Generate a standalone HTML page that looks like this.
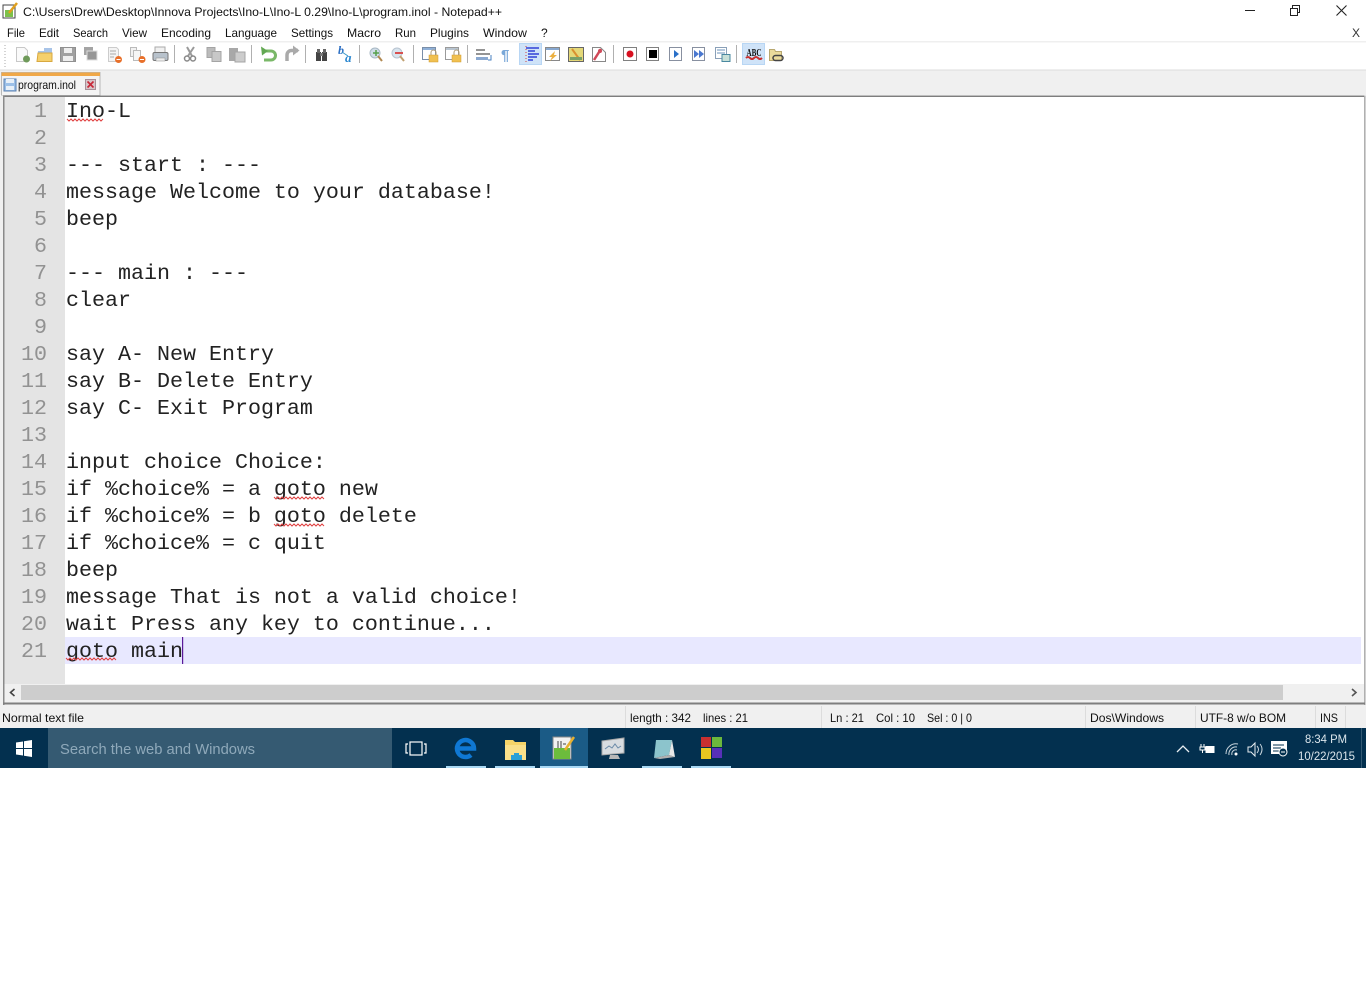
<!DOCTYPE html>
<html><head><meta charset="utf-8"><title>Notepad++</title>
<style>
html,body{margin:0;padding:0;background:#fff;width:1366px;height:986px;overflow:hidden}
svg{position:absolute;left:0;top:0;display:block}
.ui{font-family:"Liberation Sans",sans-serif;font-size:12px;fill:#111}
.c{font-family:"Liberation Mono",monospace;font-size:21.67px;fill:#222;white-space:pre}
.n{font-family:"Liberation Mono",monospace;font-size:21.67px;fill:#929292;text-anchor:end}
.sq{fill:none;stroke:#e04040;stroke-width:1}
</style></head><body>
<svg width="1366" height="986" viewBox="0 0 1366 986" xmlns="http://www.w3.org/2000/svg">
<rect width="1366" height="986" fill="#fff"/>
<!-- title -->
<g>
<rect x="3" y="5" width="12" height="13" fill="#fff" stroke="#444"/><rect x="5" y="10" width="8" height="7" fill="#7cc04a"/><path d="M9 13L17 3" stroke="#e0a020" stroke-width="2.500"/>
</g>
<text class="ui" x="23" y="16" textLength="479" lengthAdjust="spacingAndGlyphs" fill="#222">C:\Users\Drew\Desktop\Innova Projects\Ino-L\Ino-L 0.29\Ino-L\program.inol - Notepad++</text>
<path d="M1245 10.500H1255" stroke="#222" stroke-width="1"/>
<path d="M1290.500 8.500h7v7h-7zM1292.500 8V5.500h7v7H1298" fill="none" stroke="#222"/>
<path d="M1336.500 5.500l10 10M1346.500 5.500l-10 10" stroke="#222" stroke-width="1.100"/>
<!-- menu -->
<g class="ui">
<text x="7" y="37" textLength="18" lengthAdjust="spacingAndGlyphs">File</text>
<text x="39" y="37" textLength="20" lengthAdjust="spacingAndGlyphs">Edit</text>
<text x="73" y="37" textLength="35" lengthAdjust="spacingAndGlyphs">Search</text>
<text x="122" y="37" textLength="25" lengthAdjust="spacingAndGlyphs">View</text>
<text x="161" y="37" textLength="50" lengthAdjust="spacingAndGlyphs">Encoding</text>
<text x="225" y="37" textLength="52" lengthAdjust="spacingAndGlyphs">Language</text>
<text x="291" y="37" textLength="42" lengthAdjust="spacingAndGlyphs">Settings</text>
<text x="347" y="37" textLength="34" lengthAdjust="spacingAndGlyphs">Macro</text>
<text x="395" y="37" textLength="21" lengthAdjust="spacingAndGlyphs">Run</text>
<text x="430" y="37" textLength="39" lengthAdjust="spacingAndGlyphs">Plugins</text>
<text x="483" y="37" textLength="44" lengthAdjust="spacingAndGlyphs">Window</text>
<text x="541" y="37">?</text>
<text x="1352" y="37" fill="#333">X</text>
</g>
<rect y="41" width="1366" height="1.500" fill="#efefef"/>
<!-- toolbar -->
<path d="M5 45v23" stroke="#aaa" stroke-dasharray="1 2"/>
<g>
<path d="M16.500 47.500h8l3 3v11h-11z" fill="#fafafa" stroke="#c8c8c8"/><circle cx="26.500" cy="59" r="3.500" fill="#6f9a5a"/>
<path d="M38 51h6v-3h8v8h-14z" fill="#a8c4e8"/><path d="M38 53h14v8.500h-15z" fill="#f5d06c" stroke="#d8a840"/>
<rect x="60.500" y="47.500" width="15" height="14" fill="#a0a0a0" stroke="#909090"/><rect x="64" y="48" width="8" height="5" fill="#eee"/><rect x="63" y="56" width="10" height="5" fill="#eee"/>
<rect x="84" y="47" width="9" height="8" fill="#a4a4a4"/><rect x="87" y="51" width="10" height="9" fill="#969696" stroke="#ddd"/>
<path d="M108.500 47.500h8l2 2v12h-10z" fill="#f4f4f4" stroke="#ccc"/><path d="M110 51h6M110 54h6M110 57h4" stroke="#aaa"/><circle cx="118.500" cy="59.500" r="3.500" fill="#e8702a"/><path d="M116.500 59.500h4" stroke="#fff"/>
<path d="M130.500 47.500h6v9h-6z" fill="#f2f2f2" stroke="#bbb"/><path d="M133.500 50.500h7v10h-7z" fill="#f6f6f6" stroke="#bbb"/><circle cx="142" cy="59.500" r="3.500" fill="#e8702a"/><path d="M140 59.500h4" stroke="#fff"/>
<rect x="155" y="47" width="10" height="6" fill="#f0f0f0" stroke="#aaa"/><rect x="153" y="52.500" width="15" height="8" rx="1.500" fill="#b8c2cc" stroke="#777"/><rect x="156" y="58" width="9" height="3" fill="#eee" stroke="#888" stroke-width=".5"/>
<rect x="174" y="45" width="1" height="18" fill="#b0b0b0"/>
<path d="M194 47l-6 9M187 47l5 9" stroke="#9a9a9a" stroke-width="2"/><circle cx="187" cy="58.500" r="2.500" fill="none" stroke="#888" stroke-width="1.500"/><circle cx="193" cy="58.500" r="2.500" fill="none" stroke="#888" stroke-width="1.500"/>
<rect x="207" y="47.500" width="8" height="10" fill="#bbb" stroke="#a4a4a4"/><rect x="212" y="51.500" width="9" height="10" fill="#c8c8c8" stroke="#a4a4a4"/>
<rect x="229" y="48" width="9" height="13" fill="#a8a8a8"/><rect x="235" y="52" width="10" height="10" fill="#ccc" stroke="#a4a4a4"/>
<rect x="251" y="45" width="1" height="18" fill="#b0b0b0"/>
<path d="M263 51h8a4.500 4.500 0 0 1 0 9h-7" fill="none" stroke="#7ab868" stroke-width="3"/><path d="M261 46.500l1 9 6-4.500z" fill="#62a852"/>
<path d="M298 50.500h-6a4.500 4.500 0 0 0-5 4.500v6" fill="none" stroke="#aaa" stroke-width="3.500"/><path d="M293 45.500l6.500 5-6.500 5z" fill="#aaa"/>
<rect x="305" y="45" width="1" height="18" fill="#b0b0b0"/>
<rect x="316" y="52" width="5" height="9" fill="#444"/><rect x="322" y="52" width="5" height="9" fill="#444"/><rect x="317" y="49" width="3" height="4" fill="#666"/><rect x="323" y="49" width="3" height="4" fill="#666"/><rect x="320" y="53" width="3" height="3" fill="#777"/>
<text x="338" y="54" font-family="Liberation Serif,serif" font-style="italic" font-weight="bold" font-size="12" fill="#2c6fc4">b</text><text x="345" y="62" font-family="Liberation Serif,serif" font-style="italic" font-weight="bold" font-size="13" fill="#2c88d0">a</text><path d="M342 52l6 4" stroke="#3a98c8"/>
<rect x="359" y="45" width="1" height="18" fill="#b0b0b0"/>
<circle cx="375" cy="53" r="5" fill="#d0dde8" stroke="#a8b8c4"/><path d="M373 53h6M376 50v6" stroke="#56a04a" stroke-width="1.500"/><path d="M378 56l4 5" stroke="#b08850" stroke-width="2"/>
<circle cx="397" cy="53" r="5" fill="#d8e4ee" stroke="#b8c4d0"/><path d="M395 53h8" stroke="#d85050" stroke-width="2"/><path d="M400 56l4 5" stroke="#c0a070" stroke-width="2"/>
<rect x="413" y="45" width="1" height="18" fill="#b0b0b0"/>
<rect x="422.500" y="47.500" width="13" height="12" fill="#fff" stroke="#7a8ea8"/><rect x="423" y="48" width="12" height="2" fill="#8fb0d8"/><rect x="429" y="55" width="9" height="7" fill="#f0c050" stroke="#d09a30" stroke-width=".5"/><path d="M431 55v-2.500a2.500 2.500 0 0 1 5 0V55" fill="none" stroke="#b09a70"/>
<rect x="445.500" y="47.500" width="13" height="12" fill="#fff" stroke="#9a9a9a"/><rect x="446" y="48" width="12" height="2" fill="#b8c4d0"/><rect x="452" y="55" width="9" height="7" fill="#f0c050" stroke="#d09a30" stroke-width=".5"/><path d="M454 55v-2.500a2.500 2.500 0 0 1 5 0V55" fill="none" stroke="#b09a70"/>
<rect x="467" y="45" width="1" height="18" fill="#b0b0b0"/>
<path d="M476 50h9M476 54h14" stroke="#555" stroke-width="1.200"/><path d="M476 58.500h12" stroke="#8aa8d0" stroke-width="3"/><path d="M491 55v5h-3" fill="none" stroke="#4a80c0"/>
<text x="501" y="60" font-family="Liberation Sans,sans-serif" font-weight="bold" font-size="15" fill="#7aa8d8">¶</text>
<rect x="519.500" y="43.500" width="22" height="21" fill="#cfe3f8" stroke="#b8d6f4"/>
<path d="M526 48h13M528 51h7M528 54h11M528 57h9M528 60h5" stroke="#1020d0" stroke-width="1.300"/><path d="M526 46v18" stroke="#d04040" stroke-dasharray="1 2"/>
<rect x="545.500" y="47.500" width="14" height="13" fill="#fff" stroke="#888"/><rect x="546" y="48" width="13" height="2" fill="#88a8d0"/><path d="M555 51l-6 6h3l-2 4 7-6h-3z" fill="#ecb040"/>
<rect x="568.500" y="47.500" width="15" height="14" fill="#e4d878" stroke="#666"/><path d="M572 49l8 11" stroke="#d89030" stroke-width="2"/><rect x="570" y="57" width="12" height="3" fill="#78a068"/>
<path d="M592.500 47.500h8l5 5v9h-13z" fill="#fff" stroke="#888"/><path d="M594 60l7-11" stroke="#d04858" stroke-width="2.500"/><circle cx="600" cy="51" r="2" fill="#d04858"/>
<rect x="613" y="45" width="1" height="18" fill="#b0b0b0"/>
<rect x="623.500" y="47.500" width="13" height="13" fill="#fff" stroke="#808080"/><circle cx="630" cy="54" r="3.500" fill="#d81020"/>
<rect x="646.500" y="47.500" width="12" height="13" fill="#fff" stroke="#808080"/><rect x="649" y="50" width="8" height="8" fill="#000"/>
<rect x="669.500" y="47.500" width="12" height="13" fill="#fff" stroke="#8890a0"/><path d="M674 50l5 4-5 4z" fill="#2a70c8"/>
<rect x="692.500" y="47.500" width="12" height="13" fill="#fff" stroke="#8890a0"/><path d="M694 50l5 4-5 4zM699 50l5 4-5 4z" fill="#4a78d0"/>
<rect x="715.500" y="47.500" width="11" height="11" fill="#fff" stroke="#8aa0b8"/><path d="M717 50h8M717 53h8" stroke="#6a90b8"/><rect x="722" y="54.500" width="8" height="7" fill="#c8e0d8" stroke="#4a88a0"/>
<rect x="736" y="45" width="1" height="18" fill="#b0b0b0"/>
<rect x="742.500" y="43.500" width="22" height="21" fill="#cfe3f8" stroke="#b8d6f4"/>
<text x="746.500" y="56" font-family="Liberation Serif,serif" font-weight="bold" font-size="10" fill="#111" textLength="15" lengthAdjust="spacingAndGlyphs">ABC</text><path d="M746 58q2-2 4 0t4 0t4 0t4 0" fill="none" stroke="#c83030" stroke-width="2"/>
<path d="M769.500 49.500h5l1 2h6v9h-12z" fill="#eadb9c" stroke="#b8a870"/><rect x="773" y="55.500" width="10" height="5" rx="2.500" fill="none" stroke="#444" stroke-width="1.500"/>
</g>
<rect y="70" width="1366" height="25" fill="#f0f0f0"/>
<rect y="69.500" width="1366" height="1" fill="#dcdcdc"/>
<rect x="1.500" y="72.500" width="98.500" height="23" fill="#f4f4f4" stroke="#b8b8b8"/>
<rect x="1.500" y="72.500" width="98.500" height="3.500" fill="#f0a848"/>
<rect x="4" y="79" width="12" height="12" fill="#9cc0e8" stroke="#5a80b0"/><rect x="6" y="79" width="8" height="4" fill="#e8f0f8"/><rect x="6" y="86" width="8" height="4" fill="#e8f0f8"/>
<text class="ui" x="18" y="89" textLength="58" lengthAdjust="spacingAndGlyphs">program.inol</text>
<rect x="85.500" y="79.500" width="10" height="10" fill="#d8c4c8" stroke="#a89098"/><path d="M87.500 81.500l6 6M93.500 81.500l-6 6" stroke="#c82838" stroke-width="1.600"/>
<!-- editor -->
<rect x="0" y="95.500" width="1366" height="610" fill="#f0f0f0"/>
<rect x="3" y="95.500" width="1362" height="2" fill="#7e7e7e"/>
<rect x="3" y="95.500" width="1.500" height="610" fill="#8a8a8a"/>
<rect x="1364" y="95.500" width="1.500" height="610" fill="#b0b0b0"/>
<rect x="4.500" y="97" width="1359.500" height="587" fill="#fff"/>
<rect x="4.500" y="97" width="60.500" height="587" fill="#e4e4e4"/>
<rect x="65" y="637" width="1296" height="27" fill="#e8e8ff"/>
<g class="n" transform="translate(0,-1)">
<text x="47" y="118">1</text><text x="47" y="145">2</text><text x="47" y="172">3</text><text x="47" y="199">4</text><text x="47" y="226">5</text><text x="47" y="253">6</text><text x="47" y="280">7</text><text x="47" y="307">8</text><text x="47" y="334">9</text><text x="47" y="361">10</text><text x="47" y="388">11</text><text x="47" y="415">12</text><text x="47" y="442">13</text><text x="47" y="469">14</text><text x="47" y="496">15</text><text x="47" y="523">16</text><text x="47" y="550">17</text><text x="47" y="577">18</text><text x="47" y="604">19</text><text x="47" y="631">20</text><text x="47" y="658">21</text>
</g>
<g class="c" transform="translate(0,-1)">
<text x="66" y="118">Ino-L</text>
<text x="66" y="172">--- start : ---</text>
<text x="66" y="199">message Welcome to your database!</text>
<text x="66" y="226">beep</text>
<text x="66" y="280">--- main : ---</text>
<text x="66" y="307">clear</text>
<text x="66" y="361">say A- New Entry</text>
<text x="66" y="388">say B- Delete Entry</text>
<text x="66" y="415">say C- Exit Program</text>
<text x="66" y="469">input choice Choice:</text>
<text x="66" y="496">if %choice% = a goto new</text>
<text x="66" y="523">if %choice% = b goto delete</text>
<text x="66" y="550">if %choice% = c quit</text>
<text x="66" y="577">beep</text>
<text x="66" y="604">message That is not a valid choice!</text>
<text x="66" y="631">wait Press any key to continue...</text>
<text x="66" y="658">goto main</text>
</g>
<path class="sq" d="M67 119l2 2 2-2 2 2 2-2 2 2 2-2 2 2 2-2 2 2 2-2 2 2 2-2 2 2 2-2 2 2 2-2 2 2 2-2"/>
<path class="sq" d="M274 497l2 2 2-2 2 2 2-2 2 2 2-2 2 2 2-2 2 2 2-2 2 2 2-2 2 2 2-2 2 2 2-2 2 2 2-2 2 2 2-2 2 2 2-2 2 2 2-2 2 2"/>
<path class="sq" d="M274 524l2 2 2-2 2 2 2-2 2 2 2-2 2 2 2-2 2 2 2-2 2 2 2-2 2 2 2-2 2 2 2-2 2 2 2-2 2 2 2-2 2 2 2-2 2 2 2-2 2 2"/>
<path class="sq" d="M66 658l2 2 2-2 2 2 2-2 2 2 2-2 2 2 2-2 2 2 2-2 2 2 2-2 2 2 2-2 2 2 2-2 2 2 2-2 2 2 2-2 2 2 2-2 2 2 2-2 2 2"/>
<rect x="182" y="637" width="1.200" height="27" fill="#5a1a9a"/>
<!-- scrollbar -->
<rect x="4.500" y="685" width="1359.500" height="17" fill="#f0f0f0"/>
<rect x="21" y="685" width="1262" height="15" fill="#cdcdcd"/>
<path d="M14.500 689l-4 3.500 4 3.500" fill="none" stroke="#444" stroke-width="1.600"/>
<path d="M1352 689l4 3.500-4 3.500" fill="none" stroke="#555" stroke-width="1.600"/>
<rect x="3" y="702.500" width="1362" height="2" fill="#7e7e7e"/>
<rect y="705" width="1366" height="23" fill="#f0f0f0"/>
<!-- status -->
<g class="ui" fill="#222">
<text x="2" y="722" textLength="82" lengthAdjust="spacingAndGlyphs">Normal text file</text>
<text x="630" y="722" textLength="61" lengthAdjust="spacingAndGlyphs">length : 342</text>
<text x="703" y="722" textLength="45" lengthAdjust="spacingAndGlyphs">lines : 21</text>
<text x="830" y="722" textLength="34" lengthAdjust="spacingAndGlyphs">Ln : 21</text>
<text x="876" y="722" textLength="39" lengthAdjust="spacingAndGlyphs">Col : 10</text>
<text x="927" y="722" textLength="45" lengthAdjust="spacingAndGlyphs">Sel : 0 | 0</text>
<text x="1090" y="722" textLength="74" lengthAdjust="spacingAndGlyphs">Dos\Windows</text>
<text x="1200" y="722" textLength="86" lengthAdjust="spacingAndGlyphs">UTF-8 w/o BOM</text>
<text x="1320" y="722" textLength="18" lengthAdjust="spacingAndGlyphs">INS</text>
</g>
<path d="M625.500 706v22M821.500 706v22M1085.500 706v22M1195.500 706v22M1315.500 706v22M1345.500 706v22" stroke="#dcdcdc"/>
<!-- taskbar -->
<rect y="728" width="1366" height="40" fill="#03304f"/>
<rect x="48" y="728" width="344" height="40" fill="#355a72"/>
<path d="M16 742.500l7-1v6.500h-7zM24 741.300l8-1.300v8h-8zM16 749h7v6.500l-7-1zM24 749h8v8l-8-1.300z" fill="#fff"/>
<text x="60" y="754" font-family="Liberation Sans,sans-serif" font-size="14.500" fill="#8fa9ba" textLength="195" lengthAdjust="spacingAndGlyphs">Search the web and Windows</text>
<g fill="none" stroke="#fff" stroke-width="1.200"><rect x="410" y="742" width="12" height="13"/><path d="M408 744h-2v9h2M424 744h2v9h-2"/></g>
<path d="M459 748.500h15a8.500 8.500 0 1 0-3 6.500" fill="none" stroke="#0f78d4" stroke-width="4.500"/>
<path d="M505 740h8l2 2h11v18h-21z" fill="#f6d468"/><path d="M505 745h21v15h-21z" fill="#fae08a"/><path d="M511 760v-5h3v-2h5v2h3v5z" fill="#2aa0d8"/>
<rect x="540" y="728" width="48" height="40" fill="#1b5b86"/>
<rect x="553" y="737" width="18" height="22" fill="#f2f2f2" stroke="#888"/><rect x="554" y="748" width="16" height="11" fill="#6cbc3c"/><path d="M558 741v7M561 741v7M563 744h3" stroke="#444"/><path d="M565 750l9-13" stroke="#e8b030" stroke-width="2.500"/>
<path d="M602 741l22-3v15l-22 2z" fill="#d8dce0" stroke="#a8a8a8"/><path d="M605 749l4-3 3 2 3-4 3 4 3-2" fill="none" stroke="#6a8aa8"/><path d="M610 755h8l2 4h-11z" fill="#b8b8b8"/>
<path d="M656 740h16l-3 15-15 3z" fill="#8cc4cc"/><path d="M672 740l3 17-6-2 3-15z" fill="#e8e8e8"/><path d="M654 758l15-3 6 2-15 2z" fill="#b0b0b0"/>
<path d="M701 737h10v10h-10z" fill="#c83030"/><path d="M712 737h10v10h-10z" fill="#6cb83c"/><path d="M701 748h10v11h-10z" fill="#e8c820"/><path d="M712 748h10v10h-10z" fill="#5830b8"/>
<rect x="446" y="766" width="40" height="2" fill="#a8d8f4"/>
<rect x="495" y="766" width="40" height="2" fill="#a8d8f4"/>
<rect x="540" y="766" width="48" height="2" fill="#a8d8f4"/>
<rect x="642" y="766" width="40" height="2" fill="#a8d8f4"/>
<rect x="691" y="766" width="40" height="2" fill="#a8d8f4"/>
<path d="M1177 752l6-6 6 6" fill="none" stroke="#e8eef2" stroke-width="1.300"/>
<path d="M1201 744v3M1204 744v3M1200 747h5v3h-5zM1202.500 750v3" stroke="#fff" fill="none"/><rect x="1205.500" y="746" width="9" height="7" fill="#fff"/>
<g fill="none" stroke="#c8d4dc"><path d="M1226 754a10 10 0 0 1 12-10" /><path d="M1229 755a7 7 0 0 1 8-8"/><path d="M1232 755a4 4 0 0 1 5-5"/></g><circle cx="1236" cy="754" r="1.500" fill="#fff"/>
<path d="M1248 747h3l4-4v13l-4-4h-3z" fill="none" stroke="#e8eef2"/><path d="M1257 746q3 3.500 0 7M1260 744q4 5 0 11" fill="none" stroke="#c8d4dc"/>
<rect x="1271" y="741" width="16" height="13" fill="#fff"/><path d="M1273 745h11M1273 748h8M1273 751h6" stroke="#03304f"/><circle cx="1283" cy="752" r="4" fill="#03304f" stroke="#fff"/><path d="M1281 752h4" stroke="#fff"/>
<text x="1305" y="743" font-family="Liberation Sans,sans-serif" font-size="12" fill="#dce6ec" textLength="42" lengthAdjust="spacingAndGlyphs">8:34 PM</text>
<text x="1298" y="760" font-family="Liberation Sans,sans-serif" font-size="12" fill="#dce6ec" textLength="57" lengthAdjust="spacingAndGlyphs">10/22/2015</text>
<rect x="1361" y="728" width="1" height="40" fill="#335a74"/>
</svg>
</body></html>
